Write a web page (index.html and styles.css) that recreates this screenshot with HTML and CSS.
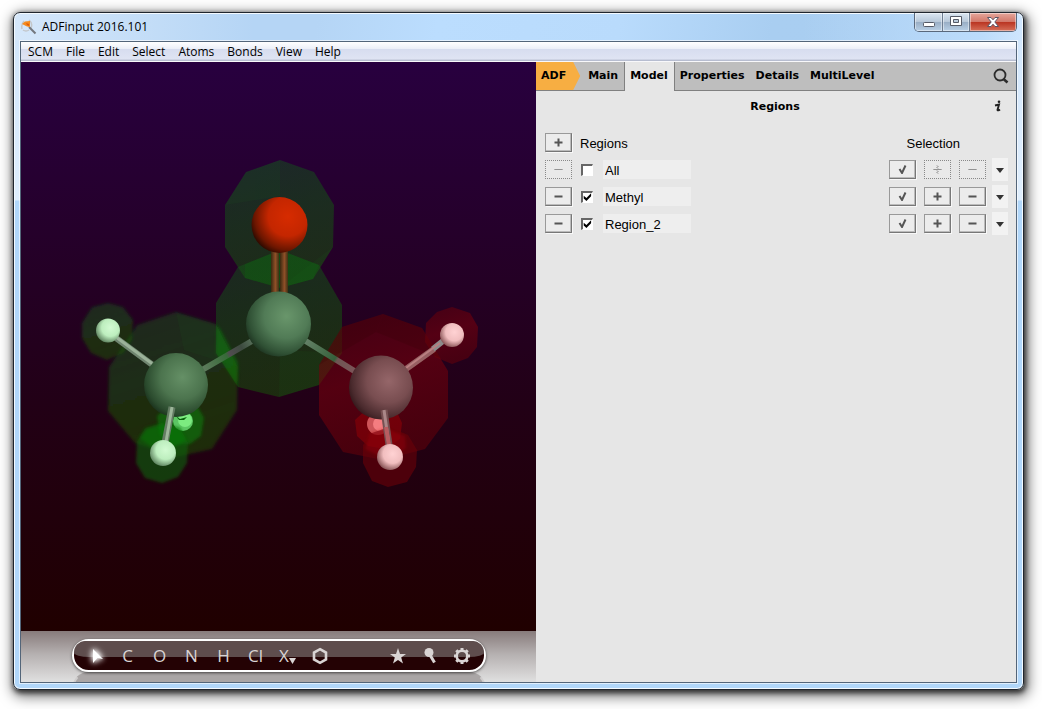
FILE: index.html
```html
<!DOCTYPE html>
<html lang="en">
<head>
<meta charset="utf-8">
<title>ADFinput 2016.101</title>
<link rel="stylesheet" href="styles.css">
</head>
<body>
<main class="window">
  <header class="titlebar">
    <svg class="app-icon" width="16" height="16" viewBox="0 0 16 16" aria-hidden="true">
      <path d="M3 2Q0 5 1 10M8 1Q12 4 10 9M2 11Q5 13 8 11" fill="none" stroke="#c3c6c9" stroke-width="1.500"/>
      <path d="M8 8l6.500 6.500" stroke="#73777d" stroke-width="2"/>
      <path d="M1 5L4 2.500L9 2V8L6 7.500L3 6Z" fill="#f58a1d"/>
      <path d="M5 4l3 1v2l-2-1z" fill="#dd5b0b"/>
    </svg>
    <h1 class="title">ADFinput 2016.101</h1>
    <div class="window-buttons">
      <button class="win-btn win-min" aria-label="Minimize"><svg width="14" height="14" viewBox="0 0 14 14"><rect x="1.500" y="7.500" width="11" height="4" rx="1" fill="#fff" stroke="#555a66"/></svg></button>
      <button class="win-btn win-max" aria-label="Maximize"><svg width="14" height="14" viewBox="0 0 14 14"><path d="M1.500 1.500h11v9h-11zM4.500 4.500v3h5v-3z" fill="#fff" fill-rule="evenodd" stroke="#555a66"/></svg></button>
      <button class="win-btn win-close" aria-label="Close"><svg width="14" height="14" viewBox="0 0 14 14"><path d="M1.500 2.500h3.500l2 2.300l2-2.300h3.500l-3.700 4.500l3.700 4.500h-3.500l-2-2.300l-2 2.300h-3.500l3.700-4.500z" fill="#fff" stroke="#5d5565"/></svg></button>
    </div>
  </header>

  <div class="client">
    <nav class="menubar" aria-label="Menu">
      <button>SCM</button><button>File</button><button>Edit</button><button>Select</button><button>Atoms</button><button>Bonds</button><button>View</button><button>Help</button>
    </nav>

    <div class="workspace">
      <section class="viewer" aria-label="Molecule">
        <svg class="scene" viewBox="21 62 515 569" role="img" aria-label="Acetone molecule with two regions">
          <defs>
            <filter id="soft" x="-10%" y="-10%" width="120%" height="120%"><feGaussianBlur stdDeviation="1.500"/></filter>
            <radialGradient id="carbon" cx=".62" cy=".38" r=".68"><stop offset="0" stop-color="#69966b"/><stop offset=".5" stop-color="#517b56"/><stop offset=".85" stop-color="#2f5034"/><stop offset="1" stop-color="#1d3320"/></radialGradient>
            <radialGradient id="carbonLeft" cx=".6" cy=".38" r=".68"><stop offset="0" stop-color="#659066"/><stop offset=".5" stop-color="#4c744e"/><stop offset=".85" stop-color="#2a4a2d"/><stop offset="1" stop-color="#182d19"/></radialGradient>
            <radialGradient id="carbonRed" cx=".62" cy=".4" r=".68"><stop offset="0" stop-color="#956669"/><stop offset=".5" stop-color="#784d50"/><stop offset=".85" stop-color="#4a2a2d"/><stop offset="1" stop-color="#301518"/></radialGradient>
            <radialGradient id="oxygen" cx=".65" cy=".35" r=".7"><stop offset="0" stop-color="#d62b00"/><stop offset=".5" stop-color="#c42600"/><stop offset=".85" stop-color="#6c1600"/><stop offset="1" stop-color="#320b00"/></radialGradient>
            <radialGradient id="hydrogen" cx=".6" cy=".38" r=".66"><stop offset="0" stop-color="#d2fbd2"/><stop offset=".55" stop-color="#bdeebe"/><stop offset="1" stop-color="#5c805d"/></radialGradient>
            <radialGradient id="hydrogenRed" cx=".6" cy=".38" r=".66"><stop offset="0" stop-color="#ffd2d3"/><stop offset=".55" stop-color="#f1bebf"/><stop offset="1" stop-color="#845052"/></radialGradient>
            <linearGradient id="double" x1="0" x2="1" y1="0" y2="0"><stop offset="0" stop-color="#392910"/><stop offset=".55" stop-color="#905028"/><stop offset="1" stop-color="#3d3113"/></linearGradient>
            <linearGradient id="bondLeft" gradientUnits="userSpaceOnUse" x1="251" y1="342" x2="204" y2="369"><stop offset="0" stop-color="#536a55"/><stop offset=".2" stop-color="#3d4b3f"/><stop offset=".45" stop-color="#514c50"/><stop offset=".52" stop-color="#376b38"/><stop offset="1" stop-color="#5d7a5c"/></linearGradient>
            <linearGradient id="bondRight" gradientUnits="userSpaceOnUse" x1="306" y1="341" x2="354" y2="371"><stop offset="0" stop-color="#638066"/><stop offset=".6" stop-color="#35603a"/><stop offset=".65" stop-color="#6f5553"/><stop offset="1" stop-color="#7b5558"/></linearGradient>
            <linearGradient id="greenShell" x1="0" y1="0" x2=".3" y2="1"><stop offset="0" stop-color="#10601c" stop-opacity=".4"/><stop offset=".5" stop-color="#106010" stop-opacity=".46"/><stop offset="1" stop-color="#156706" stop-opacity=".42"/></linearGradient>
            <linearGradient id="redShell" x1="0" y1="0" x2=".3" y2="1"><stop offset="0" stop-color="#680008" stop-opacity=".48"/><stop offset=".5" stop-color="#78000c" stop-opacity=".58"/><stop offset="1" stop-color="#6c0008" stop-opacity=".5"/></linearGradient>
          </defs>

          <g fill="url(#greenShell)">
            <path d="M280 160L314 172L334 205L333 247L313 279L280 288L245 278L225 247V205L246 172Z"/>
            <path d="M280 250L319 265L342 305V353L319 385L279 397L238 387L216 353V303L238 267Z"/>
            <path filter="url(#soft)" d="M176 312L216 324L238 367L237 410L212 449L176 457L135 443L108 411L109 367L137 325Z"/>
            <path filter="url(#soft)" d="M108 303L123 307L133 320L132 340L123 353L107 360L91 353L82 338V323L92 307Z"/>
          </g>
          <path d="M245 264L280 250L319 265L313 279L280 288L245 278Z" fill="#087b0b" opacity=".16"/>
          <path filter="url(#soft)" d="M217 325L221 330L238 362L237 385L216 353Z" fill="#0a860d" opacity=".35"/>
          <g fill="#198022" opacity=".07">
            <path d="M280 160V196L225 205L246 172Z"/><path d="M280 288L333 247L313 279Z"/>
            <path d="M279 397L280 350L342 353L319 385Z"/><path d="M176 312L184 350L238 367L216 324Z"/>
          </g>
          <g fill="url(#redShell)">
            <path d="M383 314L422 328L448 371V418L425 449L383 460L343 452L319 415V365L342 327Z"/>
            <path d="M452 307L470 313L478 327L477 347L468 358L452 364L435 357L425 342L426 323L437 312Z"/>
          </g>
          <g fill="#300004" opacity=".2">
            <path d="M383 314L376 332L319 365L342 327Z"/><path d="M383 314L422 328L440 358L376 332Z"/>
          </g>

          <g fill="url(#double)"><path d="M271 250H279V295H271Z"/><path d="M280 250H288V295H280Z"/></g>
          <g fill="none" stroke-width="6">
            <path d="M252 341L202 370" stroke="url(#bondLeft)"/>
            <path d="M304 340L356 372" stroke="url(#bondRight)"/>
            <path d="M116 338L154 366" stroke="#708570"/><path d="M116 337L154 365" stroke="#9bb299" stroke-width="3"/>
            <path d="M406 369L434 349" stroke="#976063"/><path d="M433 349L443 341" stroke="#8b8b8b"/><path d="M406 368L440 343" stroke="#b97f81" stroke-width="2"/>
          </g>
          <circle cx="279.500" cy="225" r="28" fill="url(#oxygen)"/>
          <circle cx="278.500" cy="324" r="32.500" fill="url(#carbon)"/>
          <circle cx="108" cy="330.500" r="12" fill="url(#hydrogen)"/>
          <circle cx="452" cy="335" r="12" fill="url(#hydrogenRed)"/>

          <path filter="url(#soft)" d="M175 400L195 402L204 418L201 436L190 444L173 445L160 435L157 416Z" fill="#087c09" opacity=".6"/>
          <circle cx="183" cy="421" r="10" fill="#5cc663"/>
          <circle cx="185" cy="420" r="7" fill="#7ceb80"/>
          <path d="M370 406L395 408L402 423L400 439L385 449L368 446L357 436L355 420Z" fill="#8c0006" opacity=".6"/>
          <circle cx="378" cy="424" r="11" fill="#cd5559"/>
          <circle cx="380" cy="424" r="7" fill="#f47d80"/>
          <circle cx="176" cy="385" r="32" fill="url(#carbonLeft)"/>
          <circle cx="381" cy="387.500" r="32" fill="url(#carbonRed)"/>
          <path d="M176 416L180 419L187 417L184 420H179Z" fill="#08630b"/>
          <path filter="url(#soft)" d="M162 423L180 428L188 443L187 463L178 477L162 483L145 478L136 463L137 442L145 428Z" fill="#10640a" opacity=".6"/>
          <path filter="url(#soft)" d="M162 424L180 428L186 440L162 455L140 438L147 429Z" fill="#009000" opacity=".3"/>
          <path d="M389 427L408 435L417 450L416 467L407 482L388 487L372 481L363 463V445L372 433Z" fill="#6a0008" opacity=".6"/>
          <path filter="url(#soft)" d="M385 428L405 436L406 448L389 461L365 449L370 433Z" fill="#bc0008" opacity=".28"/>
          <g fill="none">
            <path d="M172 407L165 443" stroke="#647c63" stroke-width="7"/><path d="M172 407L166 442" stroke="#9db69a" stroke-width="3"/>
            <path d="M384 410L389 445" stroke="#765052" stroke-width="7"/><path d="M384 410L389 445" stroke="#aa8788" stroke-width="3"/>
            <path d="M386 427L389 445" stroke="#b95c60" stroke-width="4"/>
          </g>
          <circle cx="163" cy="453" r="13" fill="url(#hydrogen)"/>
          <circle cx="390" cy="457" r="13" fill="url(#hydrogenRed)"/>
        </svg>

        <div class="dock">
          <div class="tools" role="toolbar" aria-label="Tools">
            <button class="tool" aria-label="Select tool"><svg class="pointer" width="24" height="24" viewBox="0 0 24 24"><path d="M9 5L19 15L13.500 14L9 19Z" fill="#fff"/></svg></button>
            <button class="tool">C</button><button class="tool">O</button><button class="tool">N</button><button class="tool">H</button><button class="tool">Cl</button>
            <button class="tool">X<svg class="more" width="7" height="6" viewBox="0 0 7 6"><path d="M0 0h7L3.500 6z" fill="currentColor"/></svg></button>
            <button class="tool" aria-label="Ring"><svg width="18" height="18" viewBox="0 0 18 18"><path d="M9 2.200L15 5.600V12.400L9 15.800L3 12.400V5.600Z" fill="none" stroke="currentColor" stroke-width="2.600"/></svg></button>
            <span class="tool-space"></span>
            <button class="tool" aria-label="Favourites"><svg width="18" height="18" viewBox="0 0 18 18"><path d="M9 1L11 7H17L12.200 10.600L14 16.500L9 12.900L4 16.500L5.800 10.600L1 7H7Z" fill="currentColor"/></svg></button>
            <button class="tool" aria-label="Optimize"><svg width="18" height="18" viewBox="0 0 18 18"><circle cx="8" cy="5.500" r="4.500" fill="currentColor"/><path d="M9 8L13.500 15.500" stroke="currentColor" stroke-width="3"/></svg></button>
            <button class="tool" aria-label="Settings"><svg width="18" height="18" viewBox="0 0 18 18"><circle cx="9" cy="9" r="5.300" fill="none" stroke="currentColor" stroke-width="2.600"/><path d="M9 1V4M9 14V17M1 9H4M14 9H17M3.300 3.300L5.400 5.400M12.600 12.600L14.700 14.700M3.300 14.700L5.400 12.600M12.600 5.400L14.700 3.300" stroke="currentColor" stroke-width="3"/></svg></button>
          </div>
          <div class="reflection"></div>
        </div>
      </section>

      <section class="panel">
        <nav class="tabs" aria-label="Panels">
          <button class="tab tab-adf">ADF</button><button class="tab">Main</button><button class="tab tab-active">Model</button><button class="tab">Properties</button><button class="tab">Details</button><button class="tab">MultiLevel</button>
          <span class="tab-rest"><button class="plain" aria-label="Search"><svg width="18" height="18" viewBox="0 0 18 18"><circle cx="8" cy="8" r="5.500" fill="none" stroke="#2b2b2b" stroke-width="1.800"/><path d="M11.500 12L15.500 15.500" stroke="#2b2b2b" stroke-width="2.600"/></svg></button></span>
        </nav>
        <div class="heading">
          <h2 class="heading-text">Regions</h2>
          <button class="plain info" aria-label="Information"><svg width="8" height="12" viewBox="0 0 8 12"><circle cx="5" cy="1.700" r="1.300" fill="#222"/><path d="M1 5.500L5 4.500L3.500 10Q4 11 6 9.500" fill="none" stroke="#222" stroke-width="1.900"/></svg></button>
        </div>
        <div class="regions">
          <div class="row">
            <button class="btn" aria-label="Add region"><svg class="glyph" viewBox="0 0 9 9"><path d="M.5 4.500h8M4.500 .5v8"/></svg></button>
            <span class="caption">Regions</span>
            <span class="selection-caption">Selection</span>
          </div>
          <div class="row">
            <button class="btn" disabled aria-label="Remove All"><svg class="glyph" viewBox="0 0 9 9"><path d="M.5 5l1-1l1 1l1-1l1 1l1-1l1 1l1-1l1 1"/></svg></button>
            <input class="check" type="checkbox" aria-label="Show All">
            <input class="name" type="text" value="All" aria-label="Region name">
            <div class="actions">
              <button class="btn" aria-label="Select"><svg class="glyph" viewBox="0 0 9 9"><path d="M1.500 4L4 8L7.500 .5"/></svg></button>
              <button class="btn" disabled aria-label="Add selection"><svg class="glyph" viewBox="0 0 9 9"><path d="M.5 5l1-1l1 1l1-1l1 1l1-1l1 1l1-1l1 1M4 .5l1 1l-1 1l1 1M4 5.500l1 1l-1 1l1 1"/></svg></button>
              <button class="btn" disabled aria-label="Remove selection"><svg class="glyph" viewBox="0 0 9 9"><path d="M.5 5l1-1l1 1l1-1l1 1l1-1l1 1l1-1l1 1"/></svg></button>
              <button class="drop" aria-label="More"><svg width="8" height="5" viewBox="0 0 8 5"><path d="M0 0h8L4 5z" fill="#333"/></svg></button>
            </div>
          </div>
          <div class="row">
            <button class="btn" aria-label="Remove Methyl"><svg class="glyph" viewBox="0 0 9 9"><path d="M.5 4.500h8"/></svg></button>
            <input class="check" type="checkbox" checked aria-label="Show Methyl">
            <input class="name" type="text" value="Methyl" aria-label="Region name">
            <div class="actions">
              <button class="btn" aria-label="Select"><svg class="glyph" viewBox="0 0 9 9"><path d="M1.500 4L4 8L7.500 .5"/></svg></button>
              <button class="btn" aria-label="Add selection"><svg class="glyph" viewBox="0 0 9 9"><path d="M.5 4.500h8M4.500 .5v8"/></svg></button>
              <button class="btn" aria-label="Remove selection"><svg class="glyph" viewBox="0 0 9 9"><path d="M.5 4.500h8"/></svg></button>
              <button class="drop" aria-label="More"><svg width="8" height="5" viewBox="0 0 8 5"><path d="M0 0h8L4 5z" fill="#333"/></svg></button>
            </div>
          </div>
          <div class="row">
            <button class="btn" aria-label="Remove Region_2"><svg class="glyph" viewBox="0 0 9 9"><path d="M.5 4.500h8"/></svg></button>
            <input class="check" type="checkbox" checked aria-label="Show Region_2">
            <input class="name" type="text" value="Region_2" aria-label="Region name">
            <div class="actions">
              <button class="btn" aria-label="Select"><svg class="glyph" viewBox="0 0 9 9"><path d="M1.500 4L4 8L7.500 .5"/></svg></button>
              <button class="btn" aria-label="Add selection"><svg class="glyph" viewBox="0 0 9 9"><path d="M.5 4.500h8M4.500 .5v8"/></svg></button>
              <button class="btn" aria-label="Remove selection"><svg class="glyph" viewBox="0 0 9 9"><path d="M.5 4.500h8"/></svg></button>
              <button class="drop" aria-label="More"><svg width="8" height="5" viewBox="0 0 8 5"><path d="M0 0h8L4 5z" fill="#333"/></svg></button>
            </div>
          </div>
        </div>
      </section>
    </div>
  </div>
</main>
</body>
</html>
```
FILE: styles.css
```css
* { box-sizing: border-box; }
body {
  margin: 0;
  min-height: 100vh;
  padding: 12px 18px 19px 13px;
  display: flex;
  background: #fff;
  color: #000;
  font: 12px "Open Sans", "Noto Sans", sans-serif;
}
button, input { margin: 0; padding: 0; border: 0; background: none; color: inherit; font: inherit; }
svg { display: block; }

.window {
  flex: 1;
  min-width: 0;
  display: flex;
  flex-direction: column;
  padding: 0 6px 6px;
  border: 1px solid #20262e;
  border-radius: 7px;
  background:
    linear-gradient(90deg, #d5e7fa 0, transparent 240px) top / 100% 28px no-repeat,
    linear-gradient(270deg, #d0e6fd 0, #bcdcfb 40px, transparent 220px) top / 100% 28px no-repeat,
    linear-gradient(100deg, #b5d5f5 30%, #bbddfe 42%, #b9dbfc 60%, #a9cef1 75%, #a9cdf0) top / 100% 28px no-repeat,
    linear-gradient(#d0e5fb, #dfeefd 187px, #b1d7fa 188px, #b1d7fa);
  box-shadow: inset 0 0 0 1px #f4faff, 1px 2px 5px 1px rgba(0,0,0,.65), 2px 4px 13px 3px rgba(0,0,0,.5);
}
.titlebar { height: 28px; display: flex; align-items: flex-start; padding-left: 1px; }
.app-icon { margin-top: 6px; }
.title { flex: 1; margin: 5px 0 0 5px; font-size: 12px; font-weight: 400; line-height: 18px; }
.window-buttons {
  display: flex;
  height: 19px;
  border: 1px solid #59687b;
  border-top: 0;
  border-radius: 0 0 5px 5px;
  overflow: hidden;
}
.win-btn {
  display: flex;
  align-items: center;
  justify-content: center;
  width: 27px;
  border-right: 1px solid #6d7d91;
  background: linear-gradient(#dce7f2, #b8c8d9 48%, #98adc4 50%, #b9d0e6);
  box-shadow: inset 0 0 0 1px rgba(255,255,255,.45);
}
.win-min { width: 28px; }
.win-close { width: 46px; border: 0; background: linear-gradient(#e5a69b, #d2786a 48%, #b93320 50%, #d6705a); }

.client { flex: 1; display: flex; flex-direction: column; border: 1px solid #536579; background: #e6e6e6; box-shadow: 0 0 0 1px rgba(255,255,255,.6); }
.menubar {
  display: flex;
  height: 20px;
  padding: 0 1px;
  border-bottom: 1px solid #f8f8fb;
  background: linear-gradient(#fff, #eceff8 35%, #d7ddef 38%, #dfe4f3 90%, #b7bdd0 95%);
}
.menubar button { padding: 0 7px 0 6px; line-height: 18px; }
.workspace { flex: 1; display: grid; grid-template-columns: minmax(0, 515fr) minmax(0, 480fr); }

.viewer { display: flex; flex-direction: column; background: linear-gradient(#28003f, #220016 55%, #200000 92%); }
.scene { flex: 1; width: 100%; min-height: 0; }
.dock {
  display: flex;
  flex-direction: column;
  align-items: center;
  height: 51px;
  padding-top: 8px;
  overflow: hidden;
  background: linear-gradient(#877b7b, #b5b0b0 45%, #e0e0e0);
}
.tools {
  flex: none;
  position: relative;
  z-index: 0;
  display: flex;
  align-items: center;
  width: 414px;
  max-width: 100%;
  height: 33px;
  padding: 0 6px;
  border: 2px solid #fff;
  border-radius: 17px;
  background: #240204;
  box-shadow: 0 1px 3px rgba(0,0,0,.6);
  color: #d9d4d4;
}
.tools::before {
  content: "";
  position: absolute;
  z-index: -1;
  inset: 0 0 46%;
  border-radius: 15px 15px 20px 20px / 15px 15px 6px 6px;
  background: #5e4d4d;
}
.tool { display: flex; align-items: center; justify-content: center; width: 32px; height: 28px; font-size: 17px; line-height: 28px; }
.tool-space { flex: 1; }
.pointer { filter: drop-shadow(0 0 3px #fff) drop-shadow(0 0 2px #fff); }
.more { margin-top: 10px; }
.reflection {
  width: 414px;
  max-width: 100%;
  height: 33px;
  flex: none;
  border: 2px solid #cfcdcd;
  border-top-color: #aaa6a6;
  border-radius: 17px;
  background: #aaa6a6;
}

.panel { background: #e6e6e6; }
.tabs { display: flex; height: 29px; font: bold 11px "DejaVu Sans", sans-serif; }
.tab { padding: 0 6px 0 5px; border-bottom: 1px solid #808080; background: #bebebe; line-height: 28px; }
.tab-adf { padding-right: 17px; position: relative; z-index: 0; }
.tab-adf::before { content: ""; position: absolute; z-index: -1; inset: 0; background: #f7ae42; clip-path: polygon(0 0, calc(100% - 10px) 0, calc(100% - 3px) 50%, calc(100% - 10px) 100%, 0 100%); }
.tab-active { padding-bottom: 1px; border: solid #808080; border-width: 0 1px; background: #e6e6e6; }
.tab-rest { flex: 1; display: flex; align-items: center; justify-content: flex-end; padding-right: 6px; border-bottom: 1px solid #808080; background: #bebebe; }
.heading { display: grid; grid-template-columns: 1fr auto 1fr; align-items: center; height: 30px; padding: 0 14px 0 12px; }
.heading-text { grid-column: 2; margin: 0; font: bold 11px "DejaVu Sans", sans-serif; }
.info { justify-self: end; }

.regions { display: grid; grid-auto-rows: 23px; gap: 4px; padding: 10px 8px 0 9px; font: 13px "Liberation Sans", Arial, sans-serif; }
.row { display: flex; align-items: center; }
.btn {
  display: flex;
  align-items: center;
  justify-content: center;
  width: 27px;
  height: 19px;
  border: 1px solid #777;
  border-top-color: #999;
  border-left-color: #999;
  background: #ececec;
  box-shadow: inset -1px -1px 0 #bbb, 1px 1px 0 #f8f8f8;
}
.btn:disabled { border: 1px dotted #888; background: #e9e9e9; box-shadow: none; }
.glyph { width: 9px; height: 9px; fill: none; stroke: #555; stroke-width: 2; }
.btn:disabled .glyph { stroke: #777; stroke-width: 1; }
.caption { padding-top: 2px; margin-left: 8px; }
.selection-caption { padding-top: 2px; margin: 0 48px 0 auto; }
.check {
  appearance: none;
  width: 12px;
  height: 12px;
  margin: 0 10px 0 9px;
  border: solid #666;
  border-width: 2px 1px 1px 2px;
  border-right-color: #fff;
  border-bottom-color: #fff;
  background: #fff;
}
.check:checked::before { content: ""; display: block; width: 9px; height: 9px; background: #000; clip-path: polygon(8% 35%, 38% 60%, 90% 8%, 90% 42%, 38% 95%, 8% 68%); }
.name { width: 88px; height: 19px; padding: 2px 2px 0; background: #eee; }
.actions { display: flex; align-items: center; gap: 8px; margin-left: auto; }
.drop { display: flex; align-items: center; justify-content: center; width: 16px; height: 23px; padding-top: 2px; margin-left: -2px; background: #f2f2f2; }
```
